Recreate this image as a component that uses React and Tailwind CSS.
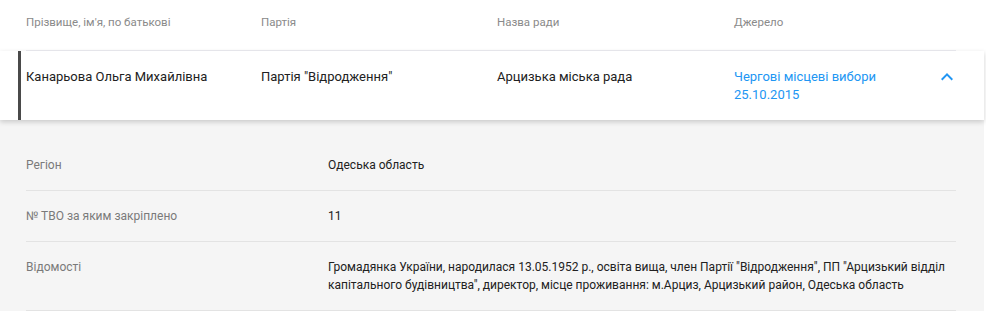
export default function App() {
  return (
    <div className="w-[986px] h-[311px] overflow-hidden bg-white font-['Roboto',_'Liberation_Sans',_sans-serif]">
      <div className="pl-[26px] pr-[30px]">
        <div className="grid grid-cols-[235px_236px_237px_1fr] h-[51px] pt-[15px] border-b border-[#ececf1] text-[11.5px] leading-[14px] text-[#8a8a8a]">
          <div>Прізвище, ім'я, по батькові</div>
          <div>Партія</div>
          <div>Назва ради</div>
          <div>Джерело</div>
        </div>
      </div>
      <div className="relative z-10 bg-white shadow-[0_2px_5px_rgba(0,0,0,0.18)] mr-[2px] pl-[18px] pr-[28px]">
        <div className="border-l-[3px] border-[#4a4a4a] pl-[5px]">
          <div className="grid grid-cols-[235px_236px_237px_1fr] pt-[17px] pb-4 text-[13px] leading-[18px] text-[#212121]">
            <div>Канарьова Ольга Михайлівна</div>
            <div>Партія "Відродження"</div>
            <div>Арцизька міська рада</div>
            <div className="flex justify-between">
              <div className="text-[#2196f3]">
                <div>Чергові місцеві вибори</div>
                <div>25.10.2015</div>
              </div>
              <svg width="24" height="24" viewBox="0 0 24 24" className="-mt-[3px] mr-[-3px]" fill="#2196f3">
                <path d="M12 8l-6 6 1.41 1.41L12 10.83l4.59 4.58L18 14z" />
              </svg>
            </div>
          </div>
        </div>
      </div>
      <div className="bg-[#f5f5f5] mr-[2px] pl-[26px] pr-[28px] pt-5 text-[12px] leading-[18px]">
        <div className="grid grid-cols-[302px_1fr] py-4 border-b border-[#e3e3e3]">
          <div className="text-[#7a7a7a]">Регіон</div>
          <div className="text-[#212121]">Одеська область</div>
        </div>
        <div className="grid grid-cols-[302px_1fr] py-4 border-b border-[#e3e3e3]">
          <div className="text-[#7a7a7a]">№ ТВО за яким закріплено</div>
          <div className="text-[#212121]">11</div>
        </div>
        <div className="grid grid-cols-[302px_1fr] py-4 border-b border-[#e3e3e3]">
          <div className="text-[#7a7a7a]">Відомості</div>
          <div className="text-[#212121] pr-[8px]">
            Громадянка України, народилася 13.05.1952 р., освіта вища, член Партії "Відродження", ПП "Арцизький відділ капітального будівництва", директор, місце проживання: м.Арциз, Арцизький район, Одеська область
          </div>
        </div>
      </div>
    </div>
  );
}
